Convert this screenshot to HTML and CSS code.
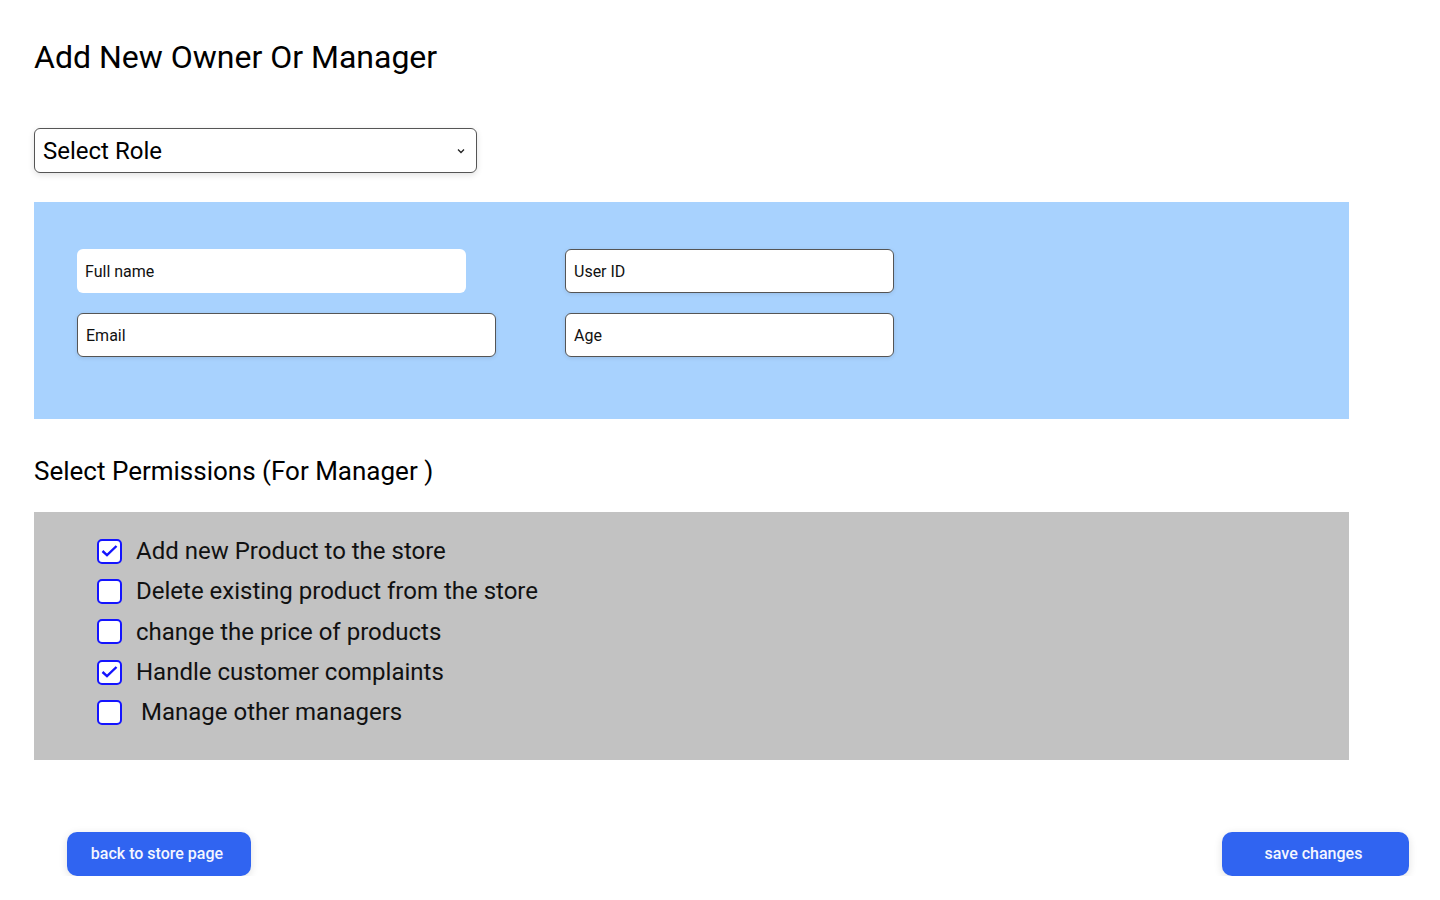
FILE: index.html
```html
<!DOCTYPE html>
<html lang="en">
<head>
<meta charset="utf-8">
<title>Add New Owner Or Manager</title>
<link rel="stylesheet" href="styles.css">
</head>
<body>
<div class="page">
  <h1 class="title">Add New Owner Or Manager</h1>

  <div class="select">
    <span class="select-text">Select Role</span>
    <svg class="chevron" width="8" height="6" viewBox="0 0 8 6"><path d="M1 1.5 L4 4.5 L7 1.5" fill="none" stroke="#222" stroke-width="1.3"/></svg>
  </div>

  <div class="info-panel">
    <div class="field field-plain field-short">Full name</div>
    <div class="field">User ID</div>
    <div class="field">Email</div>
    <div class="field">Age</div>
  </div>

  <h2 class="subtitle">Select Permissions (For Manager )</h2>

  <div class="perm-panel">
    <div class="perm-row"><span class="box"><svg width="17" height="14" viewBox="0 0 17 14"><path d="M1.5 7 L6 11.2 L15.5 2" fill="none" stroke="#1414ff" stroke-width="2.4"/></svg></span><span class="perm-label">Add new Product to the store</span></div>
    <div class="perm-row"><span class="box"></span><span class="perm-label">Delete existing product from the store</span></div>
    <div class="perm-row"><span class="box"></span><span class="perm-label">change the price of products</span></div>
    <div class="perm-row"><span class="box"><svg width="17" height="14" viewBox="0 0 17 14"><path d="M1.5 7 L6 11.2 L15.5 2" fill="none" stroke="#1414ff" stroke-width="2.4"/></svg></span><span class="perm-label">Handle customer complaints</span></div>
    <div class="perm-row"><span class="box"></span><span class="perm-label perm-indent">Manage other managers</span></div>
  </div>

  <div class="actions">
    <button class="btn btn-back">back to store page</button>
    <button class="btn btn-save">save changes</button>
  </div>
</div>
</body>
</html>
```
FILE: styles.css
```css
* { box-sizing: border-box; }
html, body { margin: 0; padding: 0; background: #fff; }
body { font-family: Roboto, "Liberation Sans", Arial, sans-serif; color: #000; }

.page { padding-left: 34px; width: 1440px; }

.title {
  margin: 38px 0 0;
  font-size: 32px;
  font-weight: 400;
  line-height: 38px;
}

.select {
  margin-top: 52px;
  width: 443px;
  height: 45px;
  border: 1px solid #555;
  border-radius: 6px;
  box-shadow: 0 2px 6px rgba(0,0,0,0.12);
  display: flex;
  align-items: center;
  justify-content: space-between;
  padding: 0 11px 0 8px;
}
.select-text { font-size: 24px; line-height: 1; }
.chevron { display: block; }

.info-panel {
  margin-top: 29px;
  width: 1315px;
  height: 217px;
  background: #a8d2fe;
  padding: 47px 0 0 43px;
  display: grid;
  grid-template-columns: 419px 329px;
  grid-auto-rows: 44px;
  column-gap: 69px;
  row-gap: 20px;
}
.field {
  background: #fff;
  border: 1px solid #555;
  border-radius: 6px;
  box-shadow: 0 1px 4px rgba(0,0,0,0.1);
  font-size: 16px;
  display: flex;
  align-items: center;
  padding-left: 8px;
  color: #111;
}
.field-plain { border: none; box-shadow: none; }
.field-short { width: 389px; }

.subtitle {
  margin: 37px 0 0;
  font-size: 26px;
  font-weight: 400;
  line-height: 30px;
}

.perm-panel {
  margin-top: 26px;
  width: 1315px;
  height: 248px;
  background: #c2c2c2;
  padding: 19px 0 0 63px;
}
.perm-row {
  height: 40.3px;
  display: flex;
  align-items: center;
}
.box {
  width: 25px;
  height: 25px;
  border: 2px solid #1414ff;
  border-radius: 5px;
  background: #fff;
  display: flex;
  align-items: center;
  justify-content: center;
  flex-shrink: 0;
}
.box svg { display: block; }
.perm-label {
  margin-left: 14px;
  font-size: 24px;
  line-height: 1;
  color: #111;
}
.perm-indent { margin-left: 19px; }

.actions {
  margin-top: 72px;
  display: flex;
  justify-content: space-between;
  padding: 0 31px 0 33px;
}
.btn {
  height: 44px;
  border: none;
  border-radius: 10px;
  background: #3064f1;
  color: #f4f6ff;
  font-family: Roboto, "Liberation Sans", Arial, sans-serif;
  font-size: 16px;
  font-weight: 500;
  box-shadow: 0 2px 8px rgba(0,0,0,0.12);
  padding: 0 4px 2px 0;
  cursor: pointer;
}
.btn-back { width: 184px; }
.btn-save { width: 187px; }
```
